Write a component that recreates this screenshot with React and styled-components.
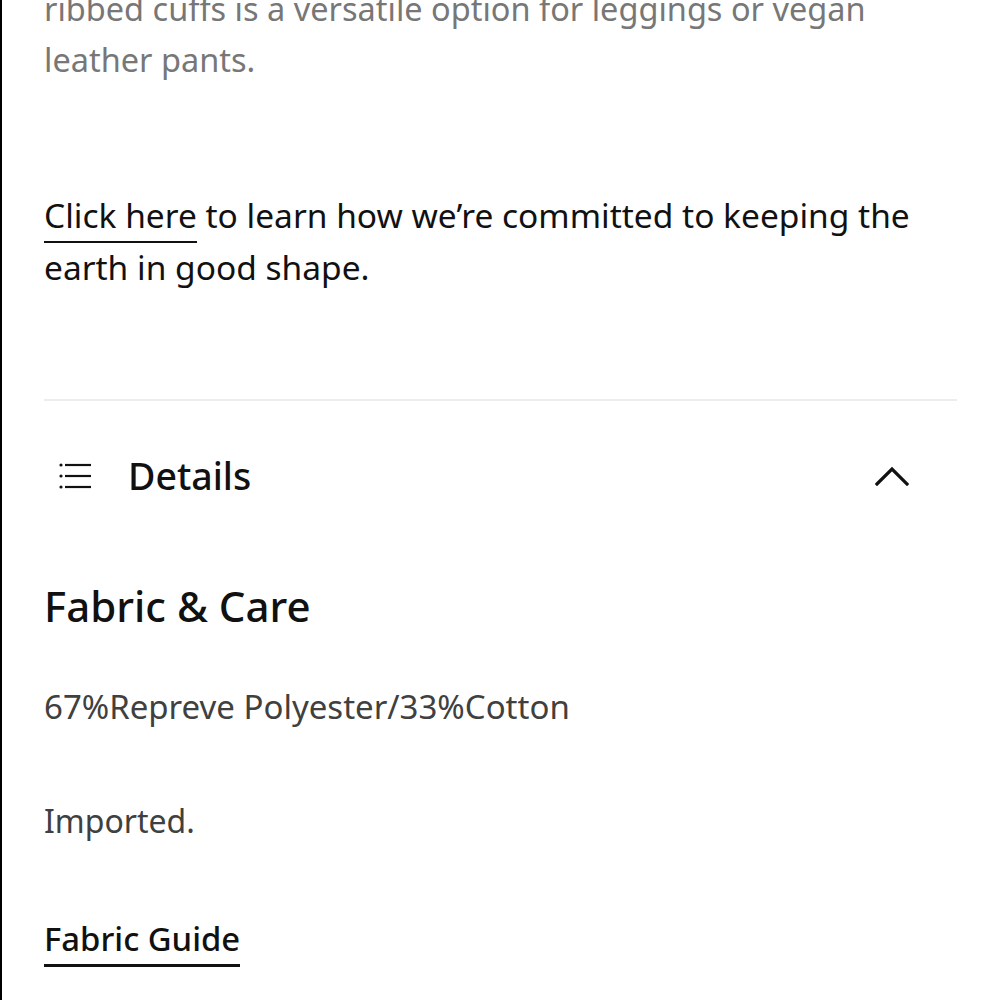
import React from "react";
import styled, { createGlobalStyle } from "styled-components";

const Global = createGlobalStyle`
  html, body { margin: 0; padding: 0; background: #fff; }
  body { font-family: "Noto Sans", "Open Sans", sans-serif; -webkit-font-smoothing: antialiased; }
`;

const Page = styled.div`
  min-height: 1000px;
  box-sizing: border-box;
  border-left: 2px solid #000;
  padding: 0 43px 0 42px;
  overflow: hidden;
`;

const Description = styled.p`
  margin: -17px 0 0;
  font-size: 32.5px;
  line-height: 51px;
  color: #777;
  white-space: nowrap;
`;

const Commitment = styled.p`
  margin: 104px 0 0;
  font-size: 33.5px;
  line-height: 52px;
  color: #111;
  white-space: nowrap;
`;

const InlineLink = styled.a`
  color: inherit;
  text-decoration: none;
  border-bottom: 2px solid #111;
  padding-bottom: 3px;
`;

const Divider = styled.hr`
  margin: 106px 0 0;
  border: none;
  height: 2px;
  background: #ededed;
`;

const AccordionHeader = styled.button`
  display: flex;
  align-items: center;
  width: 100%;
  margin-top: 47px;
  padding: 0 48px 0 14px;
  border: none;
  background: none;
  font-family: inherit;
  cursor: pointer;
  color: #111;
`;

const HeaderTitle = styled.span`
  flex: 1;
  text-align: left;
  margin-left: 36px;
  font-size: 37.5px;
  line-height: 56px;
  font-weight: 500;
`;

const SectionTitle = styled.h3`
  margin: 77px 0 0;
  font-size: 42px;
  line-height: 50px;
  font-weight: 500;
  color: #111;
`;

const BodyText = styled.p`
  margin: ${(p) => p.$mt}px 0 0;
  font-size: ${(p) => p.$size}px;
  line-height: 44px;
  color: #404040;
`;

const GuideLink = styled.a`
  display: block;
  width: fit-content;
  margin-top: 76px;
  font-size: 32.8px;
  line-height: 40px;
  font-weight: 500;
  color: #111;
  text-decoration: none;
  border-bottom: 3px solid #111;
  padding-bottom: 5px;
`;

const ListIcon = () => (
  <svg width="34" height="30" viewBox="0 0 34 30" fill="none">
    <g fill="#111">
      <circle cx="3" cy="4" r="1.6" />
      <circle cx="3" cy="15" r="1.6" />
      <circle cx="3" cy="26" r="1.6" />
    </g>
    <g stroke="#111" strokeWidth="2.2">
      <line x1="7" y1="4" x2="33" y2="4" />
      <line x1="7" y1="15" x2="33" y2="15" />
      <line x1="7" y1="26" x2="33" y2="26" />
    </g>
  </svg>
);

const ChevronUp = () => (
  <svg width="34" height="20" viewBox="0 0 34 20" fill="none">
    <polyline points="2,18 17,3 32,18" stroke="#111" strokeWidth="3.2" strokeLinecap="square" />
  </svg>
);

export default function App() {
  return (
    <>
      <Global />
      <Page>
        <Description>
          ribbed cuffs is a versatile option for leggings or vegan
          <br />
          leather pants.
        </Description>
        <Commitment>
          <InlineLink href="#">Click here</InlineLink> to learn how we’re committed to keeping the
          <br />
          earth in good shape.
        </Commitment>
        <Divider />
        <AccordionHeader type="button">
          <ListIcon />
          <HeaderTitle>Details</HeaderTitle>
          <ChevronUp />
        </AccordionHeader>
        <SectionTitle>Fabric &amp; Care</SectionTitle>
        <BodyText $mt={54} $size={33}>67%Repreve Polyester/33%Cotton</BodyText>
        <BodyText $mt={70} $size={32}>Imported.</BodyText>
        <GuideLink href="#">Fabric Guide</GuideLink>
      </Page>
    </>
  );
}
